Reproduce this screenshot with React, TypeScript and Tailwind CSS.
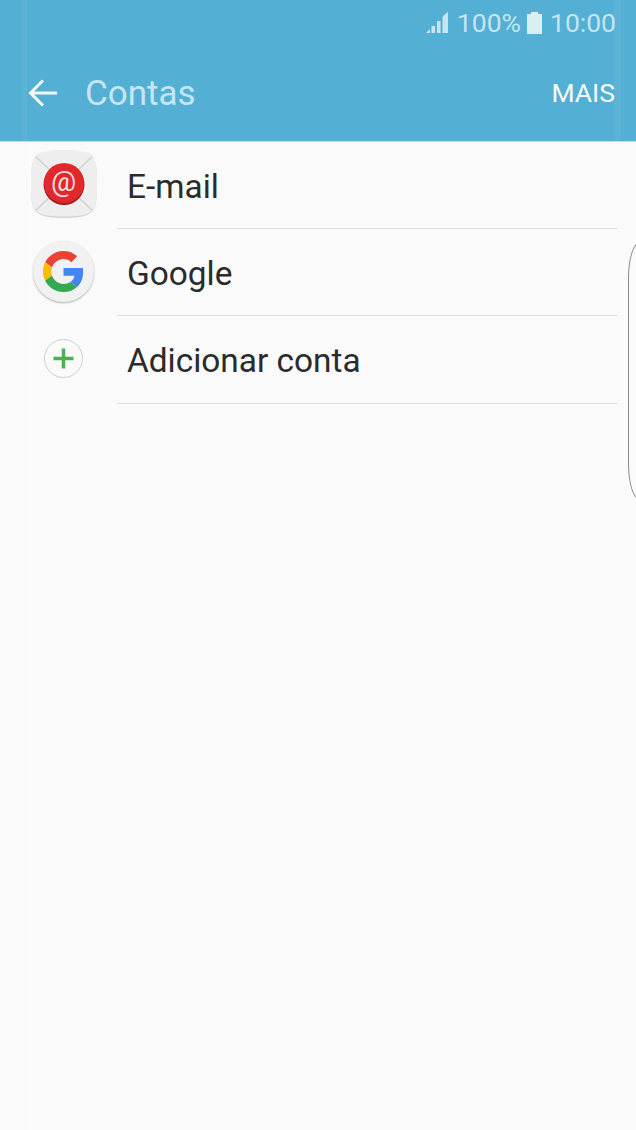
const ACCOUNTS = [
  { id: "email", label: "E-mail", icon: <EmailIcon /> },
  { id: "google", label: "Google", icon: <GoogleIcon /> },
  { id: "add", label: "Adicionar conta", icon: <AddIcon /> },
];

function EmailIcon() {
  return (
    <div className="relative mb-[1px] flex h-[68px] w-[68px] items-center justify-center">
      <svg width="68" height="68" viewBox="0 0 68 68" className="absolute inset-0">
        <path d="M34 1C52 1 60 3 63.500 8C66.500 13 67 22 67 34C67 47 66.500 55 63.500 60C60 65.500 52 68 34 68C16 68 8 65.500 4.500 60C1.500 55 1 47 1 34C1 22 1.500 13 4.500 8C8 3 16 1 34 1Z" fill="#d6d6d6" />
        <path d="M34 0C52 0 60 2 63.500 7C66.500 12 67 21 67 33C67 46 66.500 54 63.500 59C60 64.500 52 66.500 34 66.500C16 66.500 8 64.500 4.500 59C1.500 54 1 46 1 33C1 21 1.500 12 4.500 7C8 2 16 0 34 0Z" fill="#eeeeee" />
        <path d="M6 7L20 20M62 7L48 20M6 60L20 47M62 60L48 47" stroke="#d0d0d0" strokeWidth="1.500" />
        <circle cx="34" cy="34.500" r="20.500" fill="#a81a22" />
        <circle cx="34" cy="33" r="20" fill="#e1292d" />
      </svg>
      <span className="relative mb-[3px] text-[28px] leading-none text-[#ffdcdc]">@</span>
    </div>
  );
}

function GoogleIcon() {
  return (
    <div className="flex h-[61px] w-[61px] items-center justify-center rounded-full bg-[#f1f1f1] shadow-[0_1px_2px_rgba(0,0,0,0.3)]">
      <svg width="41" height="41" viewBox="0 0 48 48">
        <path fill="#EA4335" d="M24 9.500c3.540 0 6.710 1.220 9.210 3.600l6.850-6.850C35.900 2.380 30.470 0 24 0 14.620 0 6.510 5.380 2.560 13.220l7.980 6.190C12.430 13.720 17.740 9.500 24 9.500z" />
        <path fill="#4285F4" d="M46.980 24.550c0-1.570-.15-3.090-.38-4.550H24v9.020h12.940c-.58 2.960-2.260 5.480-4.780 7.180l7.730 6c4.510-4.180 7.090-10.360 7.090-17.650z" />
        <path fill="#FBBC05" d="M10.530 28.590c-.48-1.450-.76-2.990-.76-4.590s.27-3.140.76-4.590l-7.980-6.190C.92 16.460 0 20.120 0 24c0 3.880.92 7.540 2.560 10.780l7.970-6.190z" />
        <path fill="#34A853" d="M24 48c6.480 0 11.930-2.130 15.890-5.810l-7.730-6c-2.150 1.450-4.920 2.300-8.160 2.300-6.260 0-11.570-4.220-13.470-9.910l-7.980 6.190C6.510 42.620 14.620 48 24 48z" />
      </svg>
    </div>
  );
}

function AddIcon() {
  return (
    <div className="flex h-[39px] w-[39px] items-center justify-center rounded-full border border-[#cfcfcf]">
      <svg width="21" height="21" viewBox="0 0 21 21">
        <path d="M10.500 0.500V20.500M0.500 10.500H20.500" stroke="#4caf50" strokeWidth="3.500" />
      </svg>
    </div>
  );
}

export default function App() {
  return (
    <div className="relative h-[1130px] w-[636px] overflow-hidden bg-[#fafafa] font-['Roboto',sans-serif]">
      <header className="h-[141.500px] border-b border-[#b5dcea] bg-[#53afd4]">
        <div className="flex h-[45px] items-center justify-end pr-[20px] text-[26.500px] text-[#c5e5f1]">
          <svg width="22" height="22" viewBox="0 0 22 22" className="mr-[9px]">
            <path d="M0 21L4 17V21ZM5.500 14H9V21H5.500ZM11 9H14.500V21H11ZM16.500 4.500L22 0V21H16.500Z" fill="#c5e5f1" />
          </svg>
          <span>100%</span>
          <svg width="15" height="22" viewBox="0 0 15 22" className="ml-[6px] mr-[8px]">
            <path d="M4 0H11V2H15V22H0V2H4Z" fill="#dbeef5" />
          </svg>
          <span>10:00</span>
        </div>
        <div className="flex h-[95.500px] items-center pl-[28px] pr-[21px]">
          <svg width="30" height="28" viewBox="0 0 30 28">
            <path d="M29 14H3M15 1.500L2.500 14L15 26.500" fill="none" stroke="#f2fafd" strokeWidth="3" />
          </svg>
          <h1 className="ml-[27px] pt-[2px] text-[35px] text-[#c5e5f1]">Contas</h1>
          <span className="ml-auto text-[26.500px] text-[#f4fbfd]">MAIS</span>
        </div>
      </header>

      <ul>
        {ACCOUNTS.map((account) => (
          <li key={account.id} className="flex h-[87.400px] items-center pr-[18px]">
            <div className="flex h-full w-[117px] shrink-0 items-center justify-center pb-[2px] pl-[10px]">
              {account.icon}
            </div>
            <div className="flex h-full flex-1 items-center border-b border-[#dedede] pl-[10px] pt-[4px] text-[33.400px] text-[#2b2b2b]">
              {account.label}
            </div>
          </li>
        ))}
      </ul>

      {/* edge panel handle */}
      <div className="absolute left-[628px] top-[242px] h-[258px] w-[20px] rounded-l-[12px_36px] border border-[#8a8a8a]" />
      {/* curved screen edge highlights */}
      <div className="absolute left-[22px] top-0 h-[141px] w-[5px] bg-white/5" />
      <div className="absolute left-[614px] top-0 h-[141px] w-[7px] bg-white/5" />
      <div className="absolute bottom-0 left-[30px] top-[142px] w-[1px] bg-white/40" />
    </div>
  );
}
